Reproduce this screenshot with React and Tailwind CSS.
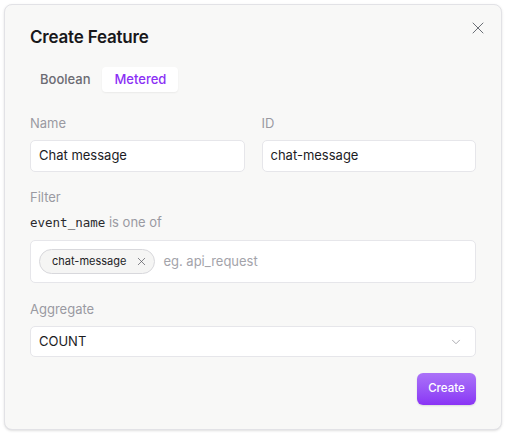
import React from 'react';
import { X, ChevronDown } from 'lucide-react';

export default function App() {
  return (
    <div className="w-[505px] h-[433px] bg-white p-[4px] font-['Inter',sans-serif]">
      <div className="relative h-[426px] w-[498px] rounded-[8px] border-[1.5px] border-[#e2e2e6] bg-[#f8f8f7] px-[25px] pt-[20px] shadow-sm">
        <button className="absolute right-[13px] top-[13px] text-[#6b6f76]">
          <X size={20} strokeWidth={1.2} />
        </button>
        <h2 className="text-[17px] font-semibold leading-[24px] tracking-[-0.2px] text-[#18181b]">Create Feature</h2>

        {/* TABS */}
        <div className="mt-[18px] flex items-center gap-[2px]">
          <div className="flex h-[25px] items-center px-[10px] text-[13px] font-medium text-[#6b6b72]">Boolean</div>
          <div className="flex h-[25px] items-center rounded-[4px] bg-white px-[12px] text-[13px] font-medium text-[#8b2ff5] shadow-[0_1px_2px_rgba(0,0,0,0.06)]">Metered</div>
        </div>

        {/* NAME / ID */}
        <div className="mt-[23px] grid grid-cols-2 gap-[17px]">
          <div>
            <p className="text-[13px] leading-[16px] text-[#9a9aa2]">Name</p>
            <div className="mt-[9px] flex h-[32px] items-center rounded-[5px] border border-[#e6e6ea] bg-white px-[8px] text-[13px] text-[#1c1c1f]">Chat message</div>
          </div>
          <div>
            <p className="text-[13px] leading-[16px] text-[#9a9aa2]">ID</p>
            <div className="mt-[9px] flex h-[32px] items-center rounded-[5px] border border-[#e6e6ea] bg-white px-[8px] text-[13px] text-[#1c1c1f]">chat-message</div>
          </div>
        </div>

        {/* FILTER */}
        <p className="mt-[17px] text-[13px] leading-[16px] text-[#9a9aa2]">Filter</p>
        <p className="mt-[9px] text-[13px] leading-[16px] text-[#9a9aa2]">
          <span className="font-['DejaVu_Sans_Mono',monospace] text-[12.5px] font-medium text-[#2a2a2e]">event_name</span> is one of
        </p>
        <div className="mt-[9px] flex h-[43px] items-center gap-[8px] rounded-[5px] border border-[#e6e6ea] bg-white px-[8px]">
          <span className="flex h-[25px] items-center gap-[9px] rounded-full border border-[#d8d8dc] bg-[#f5f5f4] pl-[12px] pr-[6px] text-[11px] font-normal text-[#1c1c1f]">
            chat-message
            <X size={13} strokeWidth={1.3} className="text-[#55555c]" />
          </span>
          <span className="text-[13px] text-[#a3a3aa]">eg. api_request</span>
        </div>

        {/* AGGREGATE */}
        <p className="mt-[18px] text-[13px] leading-[16px] text-[#9a9aa2]">Aggregate</p>
        <div className="mt-[9px] flex h-[31px] items-center justify-between rounded-[5px] border border-[#e6e6ea] bg-white pl-[8px] pr-[12px] text-[13px] text-[#1c1c1f]">
          <span>COUNT</span>
          <ChevronDown size={14} strokeWidth={1.5} className="text-[#a0a0a6]" />
        </div>

        <div className="mt-[16px] flex justify-end">
          <button className="flex h-[32px] w-[59px] items-center justify-center rounded-[6px] bg-gradient-to-b from-[#ab72f8] to-[#8a33f5] text-[11.5px] font-medium text-white shadow-[0_1px_2px_rgba(0,0,0,0.12)]">Create</button>
        </div>
      </div>
    </div>
  );
}
